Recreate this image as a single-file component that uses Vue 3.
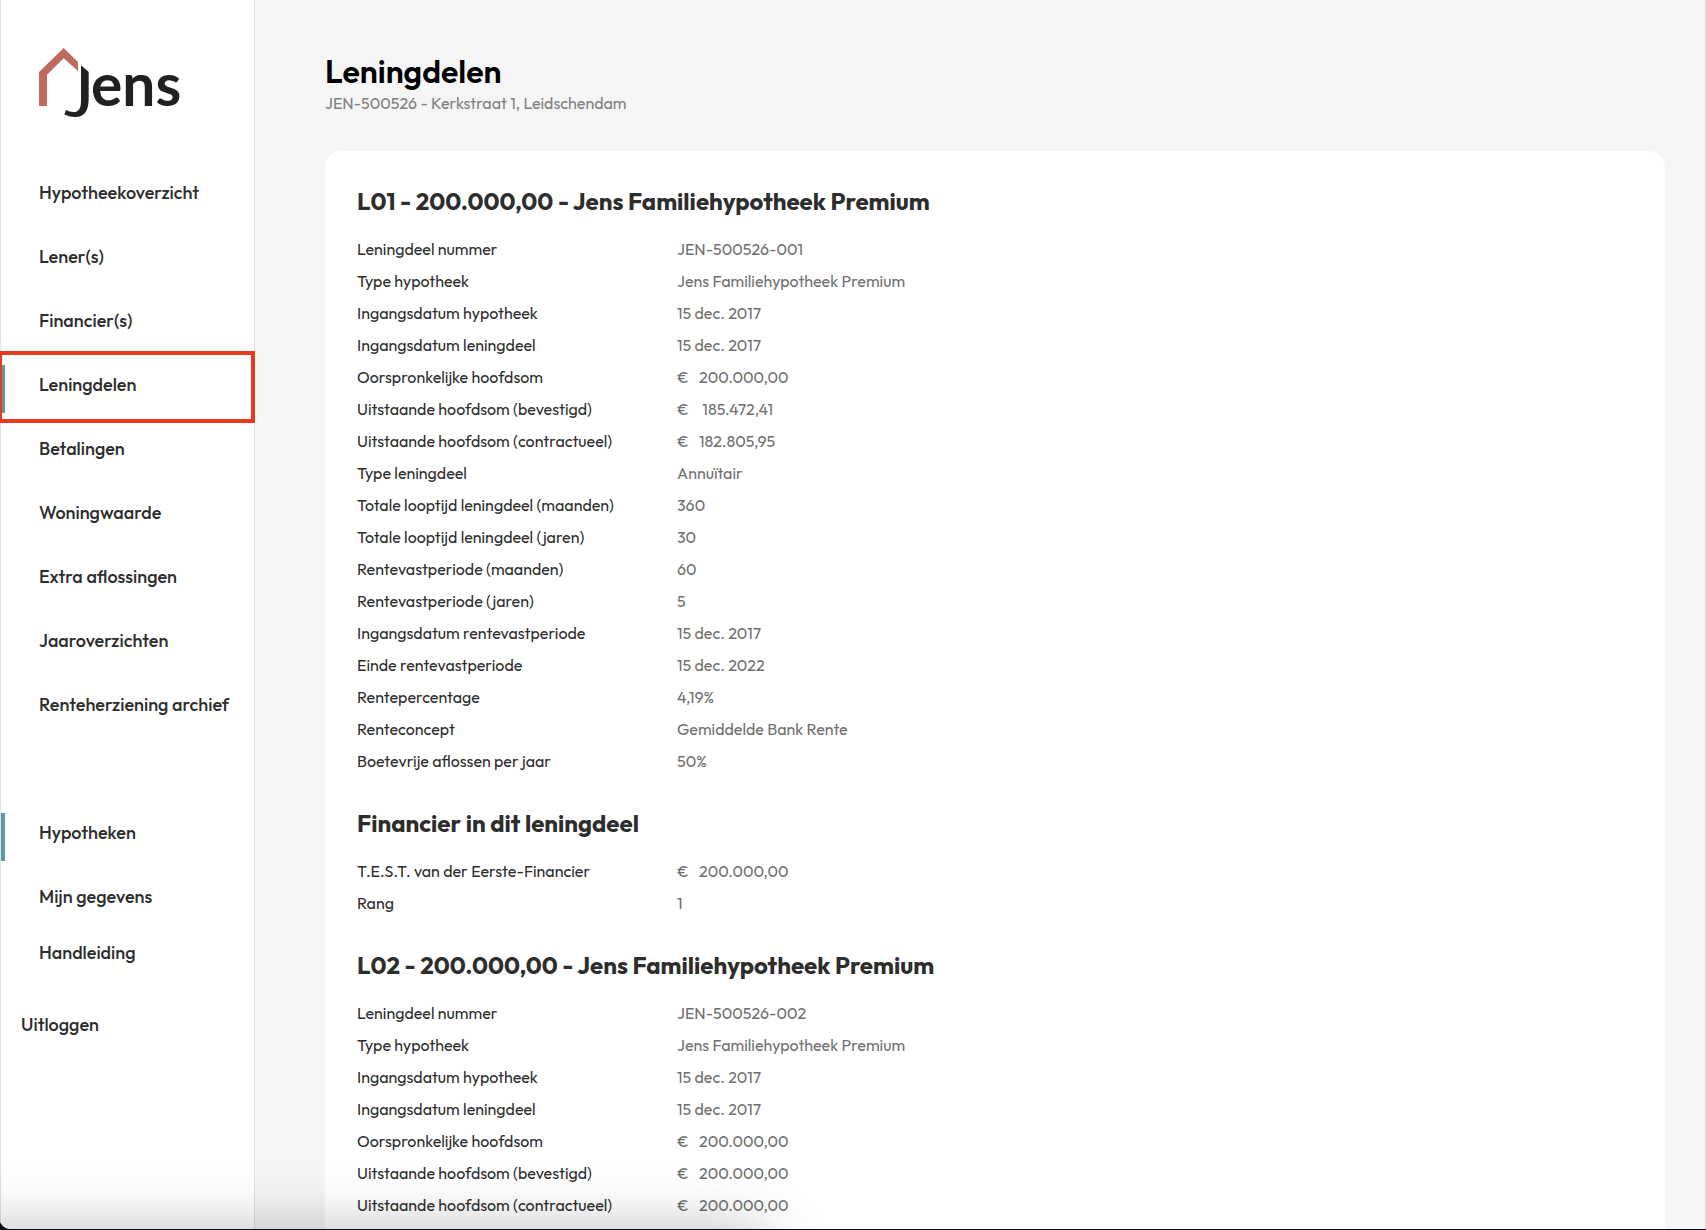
<script setup>
import { ref } from 'vue'

const loanMenu = [
  'Hypotheekoverzicht',
  'Lener(s)',
  'Financier(s)',
  'Leningdelen',
  'Betalingen',
  'Woningwaarde',
  'Extra aflossingen',
  'Jaaroverzichten',
  'Renteherziening archief'
]
const activePage = ref('Leningdelen')

const sections = [
  {
    title: 'L01 - 200.000,00 - Jens Familiehypotheek Premium',
    rows: [
      { label: 'Leningdeel nummer', value: 'JEN-500526-001' },
      { label: 'Type hypotheek', value: 'Jens Familiehypotheek Premium' },
      { label: 'Ingangsdatum hypotheek', value: '15 dec. 2017' },
      { label: 'Ingangsdatum leningdeel', value: '15 dec. 2017' },
      { label: 'Oorspronkelijke hoofdsom', amount: '200.000,00' },
      { label: 'Uitstaande hoofdsom (bevestigd)', amount: '\u00a0185.472,41' },
      { label: 'Uitstaande hoofdsom (contractueel)', amount: '182.805,95' },
      { label: 'Type leningdeel', value: 'Annuïtair' },
      { label: 'Totale looptijd leningdeel (maanden)', value: '360' },
      { label: 'Totale looptijd leningdeel (jaren)', value: '30' },
      { label: 'Rentevastperiode (maanden)', value: '60' },
      { label: 'Rentevastperiode (jaren)', value: '5' },
      { label: 'Ingangsdatum rentevastperiode', value: '15 dec. 2017' },
      { label: 'Einde rentevastperiode', value: '15 dec. 2022' },
      { label: 'Rentepercentage', value: '4,19%' },
      { label: 'Renteconcept', value: 'Gemiddelde Bank Rente' },
      { label: 'Boetevrije aflossen per jaar', value: '50%' }
    ]
  },
  {
    title: 'Financier in dit leningdeel',
    rows: [
      { label: 'T.E.S.T. van der Eerste-Financier', amount: '200.000,00' },
      { label: 'Rang', value: '1' }
    ]
  },
  {
    title: 'L02 - 200.000,00 - Jens Familiehypotheek Premium',
    rows: [
      { label: 'Leningdeel nummer', value: 'JEN-500526-002' },
      { label: 'Type hypotheek', value: 'Jens Familiehypotheek Premium' },
      { label: 'Ingangsdatum hypotheek', value: '15 dec. 2017' },
      { label: 'Ingangsdatum leningdeel', value: '15 dec. 2017' },
      { label: 'Oorspronkelijke hoofdsom', amount: '200.000,00' },
      { label: 'Uitstaande hoofdsom (bevestigd)', amount: '200.000,00' },
      { label: 'Uitstaande hoofdsom (contractueel)', amount: '200.000,00' }
    ]
  }
]
</script>

<template>
  <div class="window">
    <div class="app">
      <aside class="sidebar">
        <!-- Logo -->
        <svg class="logo" viewBox="0 0 423 210" role="img" aria-label="Jens">
          <path fill="#c0695f" d="M74 0 117 42V69L74 31 24 80V174H0V72Z" />
          <path
            fill="#202020"
            d="M126 52 149 72V150C149 188 138 207 108 207C95 207 84 204 76 199L81 186C88 190 95 192 103 192C119 192 126 182 126 158Z"
          />
          <text x="156" y="174">ens</text>
        </svg>

        <!-- Pages of the current mortgage -->
        <nav class="menu">
          <a
            v-for="item in loanMenu"
            :key="item"
            href="#"
            class="item"
            :class="{ active: item === activePage, marked: item === 'Leningdelen' }"
            @click.prevent="activePage = item"
          >
            {{ item }}
          </a>
        </nav>

        <!-- General pages -->
        <nav class="menu general">
          <a href="#" class="item active">Hypotheken</a>
          <a href="#" class="item">Mijn gegevens</a>
          <a href="#" class="item manual">Handleiding</a>
        </nav>

        <button type="button" class="logout">Uitloggen</button>
      </aside>

      <main class="content">
        <header>
          <h1>Leningdelen</h1>
          <p class="subtitle">JEN-500526 - Kerkstraat 1, Leidschendam</p>
        </header>

        <div class="card">
          <section v-for="section in sections" :key="section.title">
            <h2>{{ section.title }}</h2>
            <table>
              <tbody>
                <tr v-for="row in section.rows" :key="row.label">
                  <th scope="row">{{ row.label }}</th>
                  <td v-if="row.amount">
                    <span class="currency">€</span>{{ row.amount }}
                  </td>
                  <td v-else>{{ row.value }}</td>
                </tr>
              </tbody>
            </table>
          </section>
        </div>
      </main>
      <div class="edge-shadow"></div>
    </div>
  </div>
</template>

<style>
body {
  margin: 0;
  background: #0a0d12;
}
</style>

<style scoped>
.window {
  box-sizing: border-box;
  height: 100vh;
  padding-bottom: 1px;
  overflow: hidden;
  font-family: Outfit, Lato, sans-serif;
  color: #2d2d2d;
}
.app {
  box-sizing: border-box;
  position: relative;
  display: flex;
  height: 100%;
  overflow: hidden;
  background: #f5f5f5;
  border-right: 1px solid #dcdcdc;
  border-bottom-left-radius: 10px;
}

/* Sidebar */
.sidebar {
  box-sizing: border-box;
  flex: 0 0 255px;
  padding-top: 48px;
  background: #fff;
  border-left: 1px solid #e2e1e9;
  border-right: 1px solid #e2e1e9;
}
.logo {
  display: block;
  width: 141px;
  height: 70px;
  margin: 0 0 55px 38px;
  overflow: visible;
}
.logo text {
  font-family: Lato, sans-serif;
  font-size: 176px;
  font-weight: 700;
  fill: #202020;
}
.menu {
  display: flex;
  flex-direction: column;
  gap: 16px;
}
.general {
  margin-top: 80px;
}
.item {
  box-sizing: border-box;
  position: relative;
  height: 48px;
  padding: 8px 0 16px 34px;
  border-left: 4px solid transparent;
  font-size: 18px;
  font-weight: 500;
  line-height: 24px;
  color: inherit;
  white-space: nowrap;
  text-decoration: none;
}
.item.active {
  border-left-color: #5a9aa3;
}
.manual {
  margin-top: -8px;
}
/* Red frame around the page that is being explained */
.marked::after {
  content: "";
  position: absolute;
  inset: -14px -1px -10px -7px;
  border: 4px solid #e83a1c;
}
.logout {
  display: block;
  margin-top: 32px;
  padding: 0 20px;
  border: 0;
  background: none;
  font: inherit;
  font-size: 18px;
  font-weight: 500;
  line-height: 24px;
  color: inherit;
  cursor: pointer;
}

/* Content */
.content {
  flex: 1;
  display: flex;
  flex-direction: column;
  min-width: 0;
  padding: 51px 40px 0 70px;
}
h1 {
  margin: 0;
  font-size: 32px;
  font-weight: 600;
  line-height: 40px;
  color: #000;
}
.subtitle {
  margin: 0 0 36px;
  font-size: 16px;
  line-height: 24px;
  color: #808080;
}
.card {
  flex: 1 0 auto;
  padding: 4px 32px 0;
  background: #fff;
  border-radius: 16px 16px 0 0;
}
h2 {
  margin: 0;
  padding: 31px 0 17px;
  font-size: 24px;
  font-weight: 700;
  line-height: 30px;
}
table {
  width: 100%;
  border-collapse: collapse;
  table-layout: fixed;
}
th,
td {
  padding: 4px 0;
  font-size: 16px;
  font-weight: 400;
  line-height: 24px;
  text-align: left;
}
th {
  width: 320px;
}
td {
  color: #707070;
}
.currency {
  display: inline-block;
  width: 22px;
}

/* Shadow of the panel below the window */
.edge-shadow {
  position: absolute;
  left: -60px;
  bottom: -70px;
  width: 820px;
  height: 60px;
  border-radius: 20px;
  box-shadow: 0 0 60px 10px rgba(0, 0, 0, 0.26);
  pointer-events: none;
}
</style>
